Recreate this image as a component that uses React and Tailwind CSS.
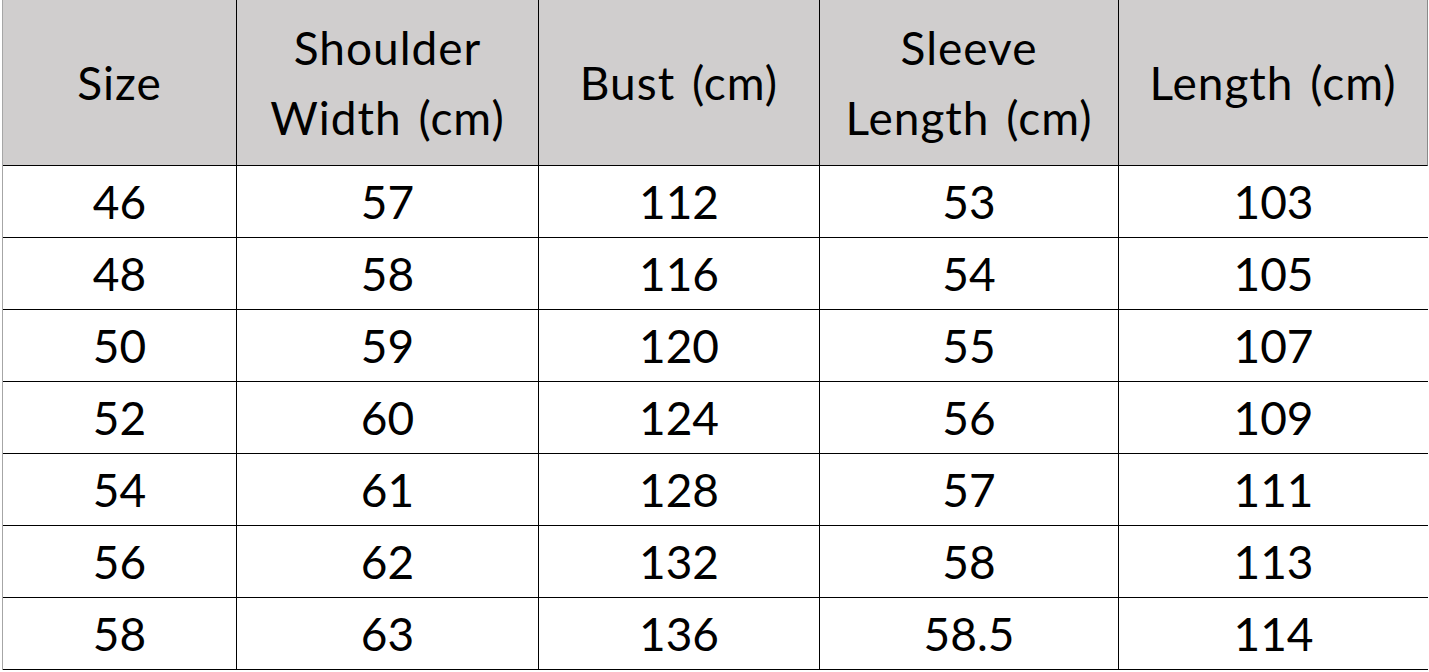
const headers = [
  ['Size'],
  ['Shoulder', 'Width (cm)'],
  ['Bust (cm)'],
  ['Sleeve', 'Length (cm)'],
  ['Length (cm)'],
];

const rows = [
  ['46', '57', '112', '53', '103'],
  ['48', '58', '116', '54', '105'],
  ['50', '59', '120', '55', '107'],
  ['52', '60', '124', '56', '109'],
  ['54', '61', '128', '57', '111'],
  ['56', '62', '132', '58', '113'],
  ['58', '63', '136', '58.5', '114'],
];

export default function App() {
  return (
    <div className="w-[1429px] h-[672px] bg-white overflow-hidden" style={{ fontFamily: 'Lato, "Open Sans", sans-serif' }}>
      <div className="ml-[2px] w-[1426px] border-l border-[#a6a6a6] grid grid-cols-[234px_302px_281px_299px_309px] text-black text-[46px]">
        {headers.map((lines, i) => (
          <div key={i}
            className={`h-[166px] bg-[#d0cece] border-b border-black flex flex-col items-center justify-center leading-[70px] tracking-[1px] [word-spacing:4px] ${i < 4 ? 'border-r' : 'border-r border-r-[#8a8a8a]'}`}>
            {lines.map(l => <span key={l}>{l}</span>)}
          </div>
        ))}
        {rows.map((r, ri) => r.map((v, ci) => (
          <div key={`${ri}-${ci}`}
            className={`h-[72px] border-b border-black flex items-center justify-center leading-none ${ci < 4 ? 'border-r' : ''}`}>
            {v}
          </div>
        )))}
      </div>
    </div>
  );
}
